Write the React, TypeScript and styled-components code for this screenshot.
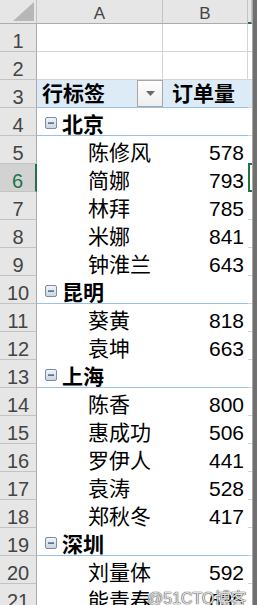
import React from 'react';
import styled, { createGlobalStyle } from 'styled-components';

const GlobalStyle = createGlobalStyle`
  html, body { margin: 0; padding: 0; background: #fff; overflow: hidden; }
  body { font-family: "Liberation Sans", "Noto Sans CJK SC", sans-serif; }
  * { box-sizing: border-box; }
`;

const GREEN = '#217346';
const GRID = '#d4d4d4';
const HEAD_BG = '#e6e6e6';
const HEAD_LINE = '#c3c3c3';
const PIVOT_BG = '#ddebf7';
const PIVOT_LINE = '#9bc2e6';

const Window = styled.div`
  position: relative;
  width: 257px;
  height: 605px;
  overflow: hidden;
  display: flex;
`;

const Sheet = styled.div`
  width: 252px;
  display: flex;
  flex-direction: column;
  flex: none;
`;

const Frame = styled.div`
  flex: none;
  width: 5px;
  border-left: 1px solid #a9a9a9;
  background: #6f6f6f;
`;

const HeaderRow = styled.div`
  display: grid;
  grid-template-columns: 37px 126px 85px 4px;
  height: 24px;
  flex: none;
`;

const Corner = styled.div`
  background: ${HEAD_BG};
  border-right: 1px solid ${HEAD_LINE};
  border-bottom: 1px solid #ababab;
  display: flex;
  align-items: flex-start;
  justify-content: flex-end;
  padding: 2px 2px 0 0;
`;

const ColHeader = styled.div<{ $active?: boolean }>`
  background: ${HEAD_BG};
  border-right: 1px solid ${HEAD_LINE};
  border-bottom: ${(p) => (p.$active ? `2px solid ${GREEN}` : '1px solid #ababab')};
  display: flex;
  align-items: flex-end;
  justify-content: center;
  padding-bottom: 1px;
  font-size: 17px;
  line-height: 17px;
  color: #444;
`;

const Row = styled.div`
  display: grid;
  grid-template-columns: 37px 126px 85px 4px;
  height: 28px;
  flex: none;
`;

const RowHeader = styled.div<{ $active?: boolean }>`
  background: ${(p) => (p.$active ? '#d2d2d2' : HEAD_BG)};
  color: ${(p) => (p.$active ? GREEN : '#444')};
  border-right: ${(p) => (p.$active ? `2px solid ${GREEN}` : `1px solid #ababab`)};
  border-bottom: 1px solid ${HEAD_LINE};
  display: flex;
  align-items: flex-end;
  justify-content: center;
  font-size: 20px;
  line-height: 20px;
`;

const GridCell = styled.div`
  border-right: 1px solid ${GRID};
  border-bottom: 1px solid ${GRID};
`;

const CCell = styled.div<{ $fill?: boolean }>`
  position: relative;
  background: ${(p) => (p.$fill ? PIVOT_BG : '#fff')};
  border-bottom: 1px solid ${GRID};
`;

const Selection = styled.div`
  position: absolute;
  left: 0;
  top: -1px;
  right: 0;
  bottom: -1px;
  border: 2px solid ${GREEN};
  border-right: none;
`;

const PivotCell = styled.div<{ $kind: 'head' | 'group' | 'item'; $align?: 'left' | 'right' }>`
  display: flex;
  align-items: flex-end;
  justify-content: ${(p) => (p.$align === 'right' ? 'flex-end' : 'flex-start')};
  background: ${(p) => (p.$kind === 'head' ? PIVOT_BG : '#fff')};
  border-bottom: ${(p) => (p.$kind === 'item' ? 'none' : `1px solid ${PIVOT_LINE}`)};
  padding-bottom: ${(p) => (p.$kind === 'head' ? '3px' : p.$kind === 'group' ? '0' : '1px')};
  font-size: 21px;
  line-height: 21px;
  font-weight: ${(p) => (p.$kind === 'item' ? 400 : 700)};
  color: #000;
  white-space: nowrap;
`;

const HeadLabel = styled(PivotCell)`
  padding-left: 5px;
  justify-content: space-between;
  align-items: stretch;
`;

const HeadText = styled.span`
  align-self: flex-end;
`;

const DropButton = styled.div`
  width: 26px;
  margin-bottom: -3px;
  border: 1px solid #a6a6a6;
  background: linear-gradient(#fdfdfd, #efefef);
  display: flex;
  align-items: center;
  justify-content: center;
`;

const GroupLabel = styled(PivotCell)`
  padding-left: 8px;
  gap: 5px;
`;

const ItemLabel = styled(PivotCell)`
  padding-left: 51px;
`;

const ValueHead = styled(PivotCell)`
  padding-left: 9px;
`;

const Value = styled(PivotCell)`
  padding-right: 4px;
`;

const MinusBox = styled.svg`
  flex: none;
  margin-bottom: 6px;
`;

const Watermark = styled.div`
  position: absolute;
  left: 147px;
  top: 591px;
  font-family: "Liberation Sans", "Noto Sans CJK SC", sans-serif;
  font-size: 16px;
  line-height: 16px;
  color: rgba(255, 255, 255, 0.85);
  text-shadow: 0 0 1px #333, 0 0 1px #333;
  white-space: nowrap;
`;

const CornerTriangle = () => (
  <svg width="21" height="19" viewBox="0 0 21 19">
    <polygon points="0,19 21,0 21,19" fill="#b7b7b7" />
  </svg>
);

const DropArrow = () => (
  <svg width="9" height="5" viewBox="0 0 9 5">
    <polygon points="0,0 9,0 4.5,5" fill="#6a6a6a" />
  </svg>
);

const Minus = () => (
  <MinusBox width="12" height="12" viewBox="0 0 12 12">
    <defs>
      <linearGradient id="mb" x1="0" y1="0" x2="0" y2="1">
        <stop offset="0" stopColor="#f4f6f9" />
        <stop offset="1" stopColor="#c9d3e1" />
      </linearGradient>
    </defs>
    <rect x="0.5" y="0.5" width="11" height="11" rx="1.5" fill="url(#mb)" stroke="#7d8da6" />
    <rect x="3" y="5.5" width="6" height="1.2" fill="#2a4470" />
  </MinusBox>
);

type Line =
  | { kind: 'blank' }
  | { kind: 'head' }
  | { kind: 'group'; label: string }
  | { kind: 'item'; label: string; value: number };

const data: Line[] = [
  { kind: 'blank' },
  { kind: 'blank' },
  { kind: 'head' },
  { kind: 'group', label: '北京' },
  { kind: 'item', label: '陈修风', value: 578 },
  { kind: 'item', label: '简娜', value: 793 },
  { kind: 'item', label: '林拜', value: 785 },
  { kind: 'item', label: '米娜', value: 841 },
  { kind: 'item', label: '钟淮兰', value: 643 },
  { kind: 'group', label: '昆明' },
  { kind: 'item', label: '葵黄', value: 818 },
  { kind: 'item', label: '袁坤', value: 663 },
  { kind: 'group', label: '上海' },
  { kind: 'item', label: '陈香', value: 800 },
  { kind: 'item', label: '惠成功', value: 506 },
  { kind: 'item', label: '罗伊人', value: 441 },
  { kind: 'item', label: '袁涛', value: 528 },
  { kind: 'item', label: '郑秋冬', value: 417 },
  { kind: 'group', label: '深圳' },
  { kind: 'item', label: '刘量体', value: 592 },
  { kind: 'item', label: '能青春', value: 635 },
];

const ACTIVE_ROW = 6;

export default function App() {
  return (
    <>
      <GlobalStyle />
      <Window>
        <Sheet>
          <HeaderRow>
            <Corner>
              <CornerTriangle />
            </Corner>
            <ColHeader>A</ColHeader>
            <ColHeader>B</ColHeader>
            <ColHeader $active />
          </HeaderRow>
          {data.map((line, i) => {
            const n = i + 1;
            const active = n === ACTIVE_ROW;
            return (
              <Row key={n}>
                <RowHeader $active={active}>{n}</RowHeader>
                {line.kind === 'blank' && (
                  <>
                    <GridCell />
                    <GridCell />
                  </>
                )}
                {line.kind === 'head' && (
                  <>
                    <HeadLabel $kind="head">
                      <HeadText>行标签</HeadText>
                      <DropButton>
                        <DropArrow />
                      </DropButton>
                    </HeadLabel>
                    <ValueHead $kind="head">订单量</ValueHead>
                  </>
                )}
                {line.kind === 'group' && (
                  <>
                    <GroupLabel $kind="group">
                      <Minus />
                      <span>{line.label}</span>
                    </GroupLabel>
                    <Value $kind="group" $align="right" />
                  </>
                )}
                {line.kind === 'item' && (
                  <>
                    <ItemLabel $kind="item">{line.label}</ItemLabel>
                    <Value $kind="item" $align="right">
                      {line.value}
                    </Value>
                  </>
                )}
                <CCell $fill={line.kind === 'head'}>{active && <Selection />}</CCell>
              </Row>
            );
          })}
        </Sheet>
        <Frame />
        <Watermark>@51CTO博客</Watermark>
      </Window>
    </>
  );
}
